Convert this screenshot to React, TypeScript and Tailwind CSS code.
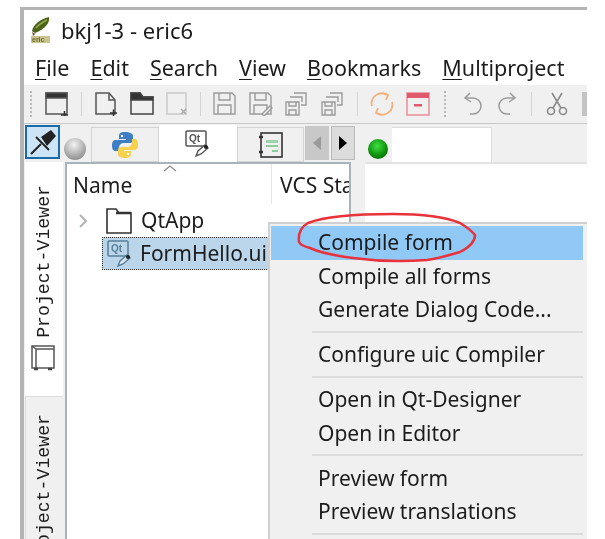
const MENU_ITEMS = [
  { label: "File", key: "F", rest: "ile" },
  { label: "Edit", key: "E", rest: "dit" },
  { label: "Search", key: "S", rest: "earch" },
  { label: "View", key: "V", rest: "iew" },
  { label: "Bookmarks", key: "B", rest: "ookmarks" },
  { label: "Multiproject", key: "M", rest: "ultiproject" },
];

const CONTEXT_GROUPS = [
  ["Compile form", "Compile all forms", "Generate Dialog Code..."],
  ["Configure uic Compiler"],
  ["Open in Qt-Designer", "Open in Editor"],
  ["Preview form", "Preview translations"],
];

function EricLogo() {
  return (
    <svg width="20" height="26" viewBox="0 0 20 26">
      <path d="M1 14C2 8 9 2 18 0c1 6-4 12-14 16z" fill="#4c6418" />
      <path d="M5 11c3-4 7-6 11-8" stroke="#94a94c" strokeWidth="1.500" fill="none" />
      <path d="M1 14c1 2 2 3 4 2l-3 3z" fill="#6b4a20" />
      <rect x="0" y="19" width="19" height="7" fill="#c9c48f" />
      <text x="1" y="25" fontSize="7" fontWeight="700" fontFamily="'Liberation Sans', sans-serif" fill="#6f6c30">eric</text>
    </svg>
  );
}

function Sep() {
  return <div className="w-px h-[24px] bg-[#d4d4d4]" />;
}

function Grip() {
  return <div className="w-[3px] h-[26px] border-l-2 border-dotted border-[#b8b8b8]" />;
}

function NewWindowIcon() {
  return (
    <svg width="24" height="24" viewBox="0 0 24 24" fill="none" stroke="#555" strokeWidth="1.5">
      <rect x="1" y="1" width="21" height="21" />
      <rect x="1" y="1" width="21" height="5" fill="#333" />
      <path d="M16 23h7M19.500 19v7" stroke="#333" />
    </svg>
  );
}

function NewFileIcon() {
  return (
    <svg width="24" height="24" viewBox="0 0 24 24" fill="none" stroke="#555" strokeWidth="1.5">
      <path d="M2 1h13l6 7v14H2z" />
      <path d="M15 1v7h6" />
      <path d="M16 21h7M19.500 17.500v7" stroke="#333" />
    </svg>
  );
}

function FolderIcon() {
  return (
    <svg width="24" height="24" viewBox="0 0 24 24" fill="none" stroke="#444" strokeWidth="1.5">
      <path d="M1 22V1h9l3 4h10v17z" />
      <path d="M1 1h9l3 4h10v3H1z" fill="#333" />
    </svg>
  );
}

function CloseFileIcon() {
  return (
    <svg width="22" height="24" viewBox="0 0 22 24" fill="none" stroke="#c9c9c9" strokeWidth="1.5">
      <path d="M1 1h19v21H1z" />
      <path d="M15 17l5 5M20 17l-5 5" stroke="#aaa" />
    </svg>
  );
}

function SaveIcon({ pen = false }: { pen?: boolean }) {
  return (
    <svg width="24" height="24" viewBox="0 0 24 24" fill="none" stroke="#9a9a9a" strokeWidth="1.4">
      <path d="M1 1h18l3 3v18H1z" />
      <path d="M6 1v7h11V1M5 22v-9h13v9" />
      {pen && <path d="M13 22l8-8 2 2-8 8z" fill="#f0f0f0" />}
    </svg>
  );
}

function SaveStackIcon() {
  return (
    <svg width="24" height="24" viewBox="0 0 24 24" fill="none" stroke="#9a9a9a" strokeWidth="1.4">
      <path d="M9 1h12v12h-5M5 5h12v5" />
      <path d="M1 10h13v13H1z" />
      <path d="M4 10v4h7v-4M4 23v-5h7v5" />
    </svg>
  );
}

function ReloadIcon() {
  return (
    <svg width="24" height="24" viewBox="0 0 24 24" fill="none" stroke="#f6b07c" strokeWidth="1.8">
      <path d="M2 14A10 10 0 0 1 17 3" />
      <path d="M22 10A10 10 0 0 1 7 21" />
      <path d="M13 1l5 2-2 5M11 23l-5-2 2-5" />
    </svg>
  );
}

function CloseAllIcon() {
  return (
    <svg width="24" height="24" viewBox="0 0 24 24" fill="none">
      <rect x="1" y="1" width="22" height="22" stroke="#ec8c9a" strokeWidth="1.5" />
      <rect x="1" y="1" width="22" height="5" fill="#e05a6e" />
      <rect x="8" y="12" width="8" height="2.500" fill="#e05a6e" />
    </svg>
  );
}

function UndoIcon({ flip = false }: { flip?: boolean }) {
  return (
    <svg width="20" height="24" viewBox="0 0 20 24" fill="none" stroke="#9a9a9a" strokeWidth="1.5" className={flip ? "-scale-x-100" : ""}>
      <path d="M7 1L2 6l6 4" />
      <path d="M2 6h8a7 7 0 0 1 0 16H7" />
    </svg>
  );
}

function ScissorsIcon() {
  return (
    <svg width="22" height="24" viewBox="0 0 22 24" fill="none" stroke="#8a8a8a" strokeWidth="1.6">
      <circle cx="5" cy="19" r="3.500" />
      <circle cx="17" cy="19" r="3.500" />
      <path d="M7 16L16 1M15 16L6 1" />
    </svg>
  );
}

function PinIcon() {
  return (
    <svg width="28" height="26" viewBox="0 0 28 26">
      <path d="M12 8l10-7 5 6-9 10z" fill="#222" />
      <path d="M7 8l13 13" stroke="#222" strokeWidth="2" />
      <path d="M12 15L2 25" stroke="#222" strokeWidth="2" />
    </svg>
  );
}

function PythonIcon() {
  return (
    <svg width="26" height="26" viewBox="0 0 26 26">
      <path d="M13 0C8 0 7 2 7 4v3h7v1H4C1 8 0 10 0 13.500S1 19 4 19h3v-3c0-3 2-5 5-5h6c2 0 3-1 3-3V4c0-2-3-4-8-4z" fill="#3d7fc4" />
      <path d="M13 26c5 0 6-2 6-4v-3h-7v-1h10c3 0 4-2 4-5.500S25 7 22 7h-2v3c0 3-2 5-5 5H9c-2 0-3 1-3 3v4c0 2 2 4 7 4z" fill="#f7d04e" />
      <circle cx="10" cy="4" r="1.200" fill="#fff" />
      <circle cx="16" cy="22" r="1.200" fill="#fff" />
    </svg>
  );
}

function QtFormIcon({ color = "#555" }: { color?: string }) {
  return (
    <svg width="26" height="28" viewBox="0 0 26 28" fill="none">
      <rect x="1" y="1" width="20" height="15" rx="1" stroke={color} strokeWidth="1.5" />
      <text x="4" y="12" fontSize="10" fontWeight="700" fontFamily="'Liberation Sans', sans-serif" fill={color}>Qt</text>
      <path d="M11 26l2-5 7-6 3 3-7 6z" stroke={color} strokeWidth="1.400" fill="#fff" fillOpacity="0.4" />
      <circle cx="21" cy="17" r="2" fill="#222" />
    </svg>
  );
}

function NotebookIcon() {
  return (
    <svg width="26" height="26" viewBox="0 0 26 26" fill="none">
      <rect x="3" y="1" width="21" height="24" stroke="#333" strokeWidth="1.6" />
      <path d="M1 5h4M1 20h4" stroke="#333" strokeWidth="2.500" />
      <path d="M8 8h12v3H8z" fill="#9bd5a8" />
      <path d="M8 14h12M14 19h6" stroke="#68c27e" strokeWidth="1.5" />
    </svg>
  );
}

function TreeFolderIcon() {
  return (
    <svg width="26" height="26" viewBox="0 0 26 26" fill="none" stroke="#333" strokeWidth="1.6">
      <path d="M1 25V1h9l3 4h12v20z" />
      <path d="M10 5h15" strokeWidth="2.500" />
    </svg>
  );
}

function DockIcon() {
  return (
    <svg width="24" height="26" viewBox="0 0 24 26" fill="none" stroke="#555" strokeWidth="1.5">
      <rect x="1" y="1" width="22" height="22" />
      <path d="M1 1l4 3v19M5 4h18" />
      <path d="M3 24h4M17 24h4" stroke="#444" strokeWidth="2.500" />
    </svg>
  );
}

export default function App() {
  return (
    <div className="relative w-[605px] h-[539px] overflow-hidden bg-white pl-[20px] pt-[7px] text-[#1c1c1c] font-['Noto_Sans','Open_Sans',sans-serif] blur-[0.4px]">
      <div className="w-[567px] h-[532px] flex flex-col border-l-[4px] border-t-[3px] border-[#b4b4b4] overflow-hidden">
        {/* title bar */}
        <div className="h-[40px] shrink-0 flex items-center pl-[7px] gap-[10px]">
          <EricLogo />
          <span className="text-[22px] leading-none">bkj1-3 - eric6</span>
        </div>

        {/* menu bar */}
        <div className="h-[35px] shrink-0 flex items-center pl-[11px] gap-[21px] text-[21.500px] leading-none">
          {MENU_ITEMS.map((item) => (
            <span key={item.label}>
              <span className="underline underline-offset-[3px] decoration-1">{item.key}</span>
              {item.rest}
            </span>
          ))}
        </div>

        {/* toolbar */}
        <div className="h-[39px] shrink-0 flex items-center bg-[#f0f0f0] border-b border-[#c8c8c8] pl-[6px]">
          <Grip />
          <div className="flex items-center gap-[12px] ml-[13px]">
            <NewWindowIcon />
            <Sep />
            <NewFileIcon />
            <FolderIcon />
            <CloseFileIcon />
            <Sep />
            <SaveIcon />
            <SaveIcon pen />
            <SaveStackIcon />
            <SaveStackIcon />
            <Sep />
            <ReloadIcon />
            <CloseAllIcon />
          </div>
          <div className="w-px h-[38px] bg-[#cfcfcf] ml-[8px] mr-[6px]" />
          <Grip />
          <div className="flex items-center gap-[14px] ml-[17px]">
            <UndoIcon />
            <UndoIcon flip />
            <Sep />
            <ScissorsIcon />
            <div className="w-[10px] h-[24px] bg-[#c4c4c4]" />
          </div>
        </div>

        {/* tab row */}
        <div className="h-[38px] shrink-0 flex items-stretch bg-[#f0f0f0]">
          <div className="w-[35px] h-[34px] ml-px mt-px border-2 border-[#1a6aa8] bg-[#cde4f7] flex items-center justify-center">
            <PinIcon />
          </div>
          <div className="w-[22px] h-[22px] ml-[4px] mt-[14px] rounded-full bg-[radial-gradient(circle_at_45%_30%,#f2f2f2,#9a9a9a_70%,#777)]" />
          <div className="w-[68px] ml-[5px] mt-[3px] h-[35px] bg-[#f0f0f0] border border-[#d4d4d4] flex items-center justify-center">
            <PythonIcon />
          </div>
          <div className="w-[78px] h-[38px] mt-px bg-white flex items-center justify-center">
            <QtFormIcon />
          </div>
          <div className="w-[67px] mt-[3px] h-[35px] bg-[#f0f0f0] border border-[#d4d4d4] flex items-center justify-center">
            <NotebookIcon />
          </div>
          <div className="w-[24px] h-[34px] mt-[2px] ml-px bg-[#c8c8c8] flex items-center justify-center">
            <div className="w-0 h-0 border-y-[7px] border-y-transparent border-r-[8px] border-r-[#9a9a9a]" />
          </div>
          <div className="w-[24px] h-[34px] mt-[2px] ml-[2px] bg-[#dcdcdc] border border-[#bbbbbb] flex items-center justify-center">
            <div className="w-0 h-0 border-y-[7px] border-y-transparent border-l-[8px] border-l-black" />
          </div>
          <div className="w-[20px] h-[20px] ml-[13px] mt-[15px] rounded-full bg-[radial-gradient(circle_at_45%_35%,#3fe03f,#0a8a0a_60%,#035003)]" />
          <div className="w-[100px] h-[37px] ml-[4px] mt-[3px] bg-white border-t border-r border-[#dcdcdc]" />
        </div>

        {/* body */}
        <div className="flex-1 min-h-0 flex bg-[#f0f0f0]">
          {/* vertical tabs */}
          <div className="w-[38px] shrink-0 ml-px flex flex-col overflow-hidden">
            <div className="h-[234px] shrink-0 bg-white flex flex-col items-center pt-[23px]">
              <span className="[writing-mode:vertical-rl] rotate-180 font-['Liberation_Mono',monospace] text-[18.200px] leading-none whitespace-nowrap">Project-Viewer</span>
              <div className="mt-[7px] -ml-[3px]">
                <DockIcon />
              </div>
            </div>
            <div className="flex-1 min-h-0 overflow-hidden border-t border-l border-[#dcdcdc] flex items-start justify-center pt-[17px]">
              <span className="shrink-0 [writing-mode:vertical-rl] rotate-180 font-['Liberation_Mono',monospace] text-[18.200px] leading-none whitespace-nowrap">Project-Viewer</span>
            </div>
          </div>

          {/* project tree */}
          <div className="w-[286px] shrink-0 ml-[2px] bg-white border-l-2 border-r-2 border-t-2 border-[#a9b3bc] text-[21px] leading-none">
            <div className="relative h-[40px] flex">
              <svg className="absolute left-[96px] top-[1px]" width="14" height="7" viewBox="0 0 14 7" fill="none" stroke="#8a8a8a" strokeWidth="1.2">
                <path d="M1 6l6-5 6 5" />
              </svg>
              <div className="w-[205px] pl-[6px] pt-[11px] border-r border-[#e4e4e4]">Name</div>
              <div className="pl-[8px] pt-[11px] whitespace-nowrap overflow-hidden w-[77px]">VCS Sta</div>
            </div>
            <div className="h-[33px] flex items-center pl-[11px]">
              <svg width="11" height="16" viewBox="0 0 11 16" fill="none" stroke="#b4b4b4" strokeWidth="2">
                <path d="M2 2l6 6-6 6" />
              </svg>
              <div className="ml-[17px]">
                <TreeFolderIcon />
              </div>
              <span className="ml-[9px]">QtApp</span>
            </div>
            <div className="h-[33px] ml-[35px] flex items-center pl-[4px] bg-[#bbd6ea] border border-dotted border-[#333] whitespace-nowrap">
              <QtFormIcon color="#5a7f99" />
              <span className="ml-[7px]">FormHello.ui</span>
            </div>
          </div>

          {/* editor area */}
          <div className="flex-1 ml-[14px] border-t-2 border-[#e2e2e2] bg-white" />
        </div>
      </div>

      {/* context menu */}
      <div className="absolute left-[268px] top-[222px] w-[319px] h-[317px] overflow-hidden bg-[#f0f0f0] border-l-[2px] border-t-[2px] border-[#d0d0d0] pl-[1px] pt-[2px] pr-[4px] text-[21px] leading-none">
        {CONTEXT_GROUPS.map((group) => (
          <div key={group[0]}>
            {group.map((label) => (
              <div
                key={label}
                className={`h-[33.500px] flex items-center pl-[47px] whitespace-nowrap ${label === "Compile form" ? "bg-[#90c8f6]" : ""}`}
              >
                {label}
              </div>
            ))}
            <div className="h-[2px] bg-[#dcdcdc] ml-[41px] mt-[4px] mb-[5.500px]" />
          </div>
        ))}
      </div>

      {/* hand drawn annotation */}
      <svg className="absolute left-[296px] top-[210px]" width="184" height="56" viewBox="0 0 184 56" fill="none">
        <path
          d="M3 32C2 24 5 17 12 13 30 6 60 4 97 4c26 0 50 2 67 9 5 3 11 7 15 12 0 7-7 13-15 17-10 3-20 6-33 8-26 2-52 1-74-2-16-2-30-4-43-10C6 36 4 34 3 32z"
          stroke="#e8323c"
          strokeWidth="2.500"
        />
      </svg>
    </div>
  );
}
